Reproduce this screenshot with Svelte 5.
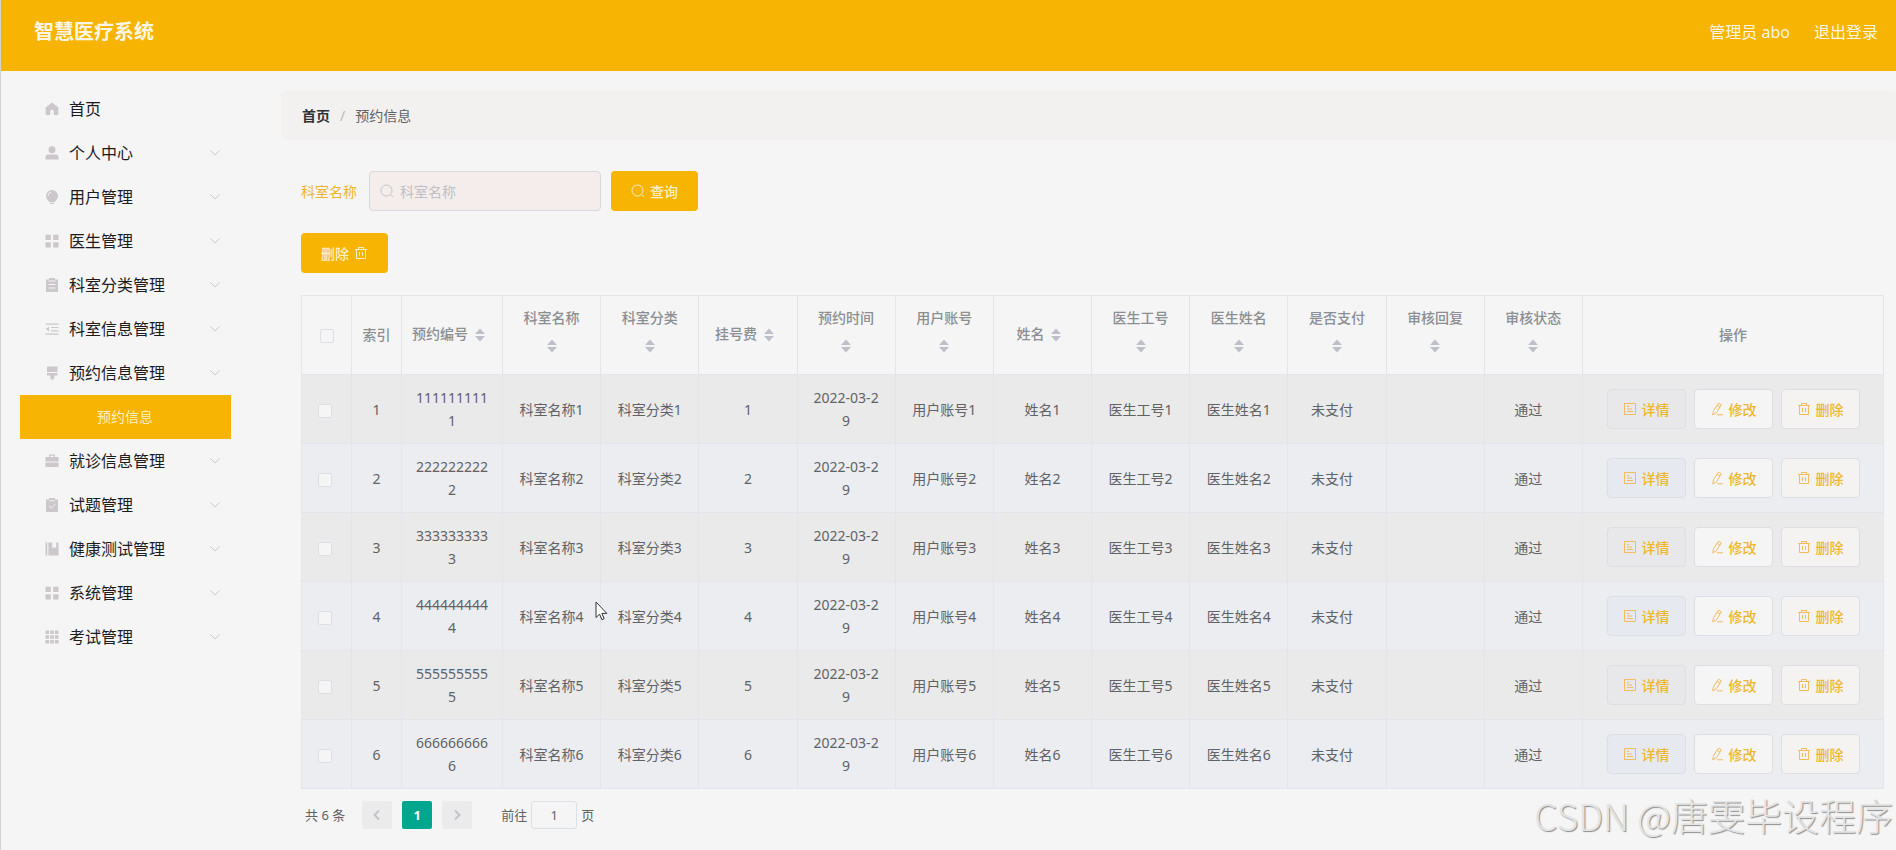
<!-- Appointment list page of the 智慧医疗系统 admin -->
<script lang="ts">
  type MenuItem = { icon: string; label: string; child?: string };

  // ── Sidebar ──────────────────────────────────────────────
  const menu: MenuItem[] = [
    { icon: 'home', label: '首页' },
    { icon: 'user', label: '个人中心' },
    { icon: 'bulb', label: '用户管理' },
    { icon: 'grid', label: '医生管理' },
    { icon: 'order', label: '科室分类管理' },
    { icon: 'fold', label: '科室信息管理' },
    { icon: 'brush', label: '预约信息管理', child: '预约信息' },
    { icon: 'case', label: '就诊信息管理' },
    { icon: 'claim', label: '试题管理' },
    { icon: 'book', label: '健康测试管理' },
    { icon: 'grid', label: '系统管理' },
    { icon: 'dots', label: '考试管理' },
  ];

  // ── Table ────────────────────────────────────────────────
  const columns = [
    '预约编号', '科室名称', '科室分类', '挂号费', '预约时间', '用户账号',
    '姓名', '医生工号', '医生姓名', '是否支付', '审核回复', '审核状态',
  ];

  const rows = [1, 2, 3, 4, 5, 6].map((n) => ({
    n,
    code: String(n).repeat(10),
    date: '2022-03-29',
    paid: '未支付',
    reply: '',
    status: '通过',
  }));

  let keyword = $state('');
  let page = $state('1');
  let selected: number[] = $state([]);

  function toggleAll() {
    selected = selected.length === rows.length ? [] : rows.map((r) => r.n);
  }
</script>

{#snippet trash()}
  <svg class="icon" viewBox="0 0 14 14" aria-hidden="true">
    <path d="M1 3.500h12M4.500 3.500v-2h5v2M2.500 3.500v9h9v-9M5.500 6v4M8.500 6v4" />
  </svg>
{/snippet}

{#snippet search()}
  <svg class="icon" viewBox="0 0 14 14" aria-hidden="true">
    <circle cx="6.500" cy="6.500" r="5.500" /><path d="M10.500 10.500L13 13" />
  </svg>
{/snippet}

{#snippet menuIcon(name: string)}
  <svg class="menu-icon" viewBox="0 0 14 14" aria-hidden="true">
    {#if name === 'home'}
      <path d="M7 .5L.7 5.600V13h4.500V9.500a1.800 1.800 0 0 1 3.600 0V13h4.500V5.600z" />
    {:else if name === 'user'}
      <circle cx="7" cy="3.700" r="3.500" />
      <path d="M3 8.500h8a2.500 2.500 0 0 1 2.500 2.500v2.500H.5V11A2.500 2.500 0 0 1 3 8.500z" />
    {:else if name === 'bulb'}
      <path d="M7 0a6 6 0 0 0-6 6c0 2.700 2 4 3 6h6c1-2 3-3.300 3-6a6 6 0 0 0-6-6zM5 12.800h4V14H5z" />
      <path class="cut" d="M3 6a4 4 0 0 1 3-3.800" />
    {:else if name === 'grid'}
      <path d="M.5.800h5.300v5.300H.5zM8.200.800h5.300v5.300H8.200zM.5 8.200h5.300v5.300H.5zM8.200 8.200h5.300v5.300H8.200z" />
    {:else if name === 'order'}
      <path d="M1 1.500h3V0h6v1.500h3V14H1z" />
      <path class="cut" d="M3.500 3h7M3.500 6.500h7M3.500 10h7" />
    {:else if name === 'fold'}
      <path d="M.5 1.500h13v1.200H.5zM6 4.900h7.500v1.200H6zM6 8.200h7.500v1.200H6zM.5 11.500h13v1.200H.5zM4 4.500v5L.8 7z" />
    {:else if name === 'brush'}
      <path d="M2 .5h10.500V6H2zM2 7h10.500v2.500h-3L8.800 13.500H5.800L5.200 9.500H2z" />
    {:else if name === 'case'}
      <path d="M4 3V.5h6V3h3.500v4.500H.5V3zM5.200 1.700V3h3.600V1.700zM.5 8.500h13V13H.5z" fill-rule="evenodd" />
    {:else if name === 'claim'}
      <path d="M1 1.500h3V0h6v1.500h3V14H1z" />
      <path class="cut" d="M4.500 2.800h5M4 7.800l2.300 2.200L10.500 6" />
    {:else if name === 'book'}
      <path d="M.5.500h1.800v13H.5zM3.400.500h3.800v6l2-1.600 2 1.600v-6h2.300v13H3.400z" />
    {:else}
      <path d="M.5.500h3.600v3.600H.5zM5.200.500h3.600v3.600H5.200zM9.900.500h3.600v3.600H9.900zM.5 5.200h3.600v3.600H.5zM5.200 5.200h3.600v3.600H5.200zM9.900 5.200h3.600v3.600H9.900zM.5 9.900h3.600v3.600H.5zM5.200 9.900h3.600v3.600H5.200zM9.900 9.900h3.600v3.600H9.900z" />
    {/if}
  </svg>
{/snippet}

<div class="app">
  <header class="topbar">
    <h1>智慧医疗系统</h1>
    <nav class="topbar-right">
      <a href="#user">管理员 abo</a>
      <a href="#logout">退出登录</a>
    </nav>
  </header>

  <div class="body">
    <aside class="sidebar">
      {#each menu as item, i}
        <a class="menu-item" href="#menu-{i}">
          {@render menuIcon(item.icon)}
          <span>{item.label}</span>
          {#if i > 0}
            <svg class="arrow" viewBox="0 0 12 12" aria-hidden="true"><path d="M1.500 3.500L6 8l4.500-4.500" /></svg>
          {/if}
        </a>
        {#if item.child}
          <a class="menu-child" href="#current">{item.child}</a>
        {/if}
      {/each}
    </aside>

    <main>
      <nav class="breadcrumb">
        <a href="#home">首页</a>
        <span class="slash">/</span>
        <span>预约信息</span>
      </nav>

      <div class="content">
        <form class="filter" onsubmit={(e) => e.preventDefault()}>
          <label for="keyword">科室名称</label>
          <div class="search-box">
            {@render search()}
            <input id="keyword" type="text" placeholder="科室名称" bind:value={keyword} />
          </div>
          <button class="btn-primary" type="submit">{@render search()}查询</button>
        </form>

        <button class="btn-primary" type="button">删除{@render trash()}</button>

        <table>
          <colgroup>
            <col class="col-small" />
            <col class="col-small" />
            <col class="col-code" />
            {#each columns.slice(1) as _}
              <col />
            {/each}
            <col class="col-actions" />
          </colgroup>
          <thead>
            <tr>
              <th>
                <input type="checkbox" aria-label="全选" checked={selected.length === rows.length} onchange={toggleAll} />
              </th>
              <th>索引</th>
              {#each columns as title}
                <th>
                  {title}<span class="caret">
                    <svg viewBox="0 0 10 14" aria-hidden="true"><path d="M5 .5l5 5.500H0zM5 13.500l5-5.500H0z" /></svg>
                  </span>
                </th>
              {/each}
              <th>操作</th>
            </tr>
          </thead>
          <tbody>
            {#each rows as row}
              <tr>
                <td class="shifted"><input type="checkbox" aria-label="选择 {row.n}" value={row.n} bind:group={selected} /></td>
                <td>{row.n}</td>
                <td>{row.code}</td>
                <td>科室名称{row.n}</td>
                <td>科室分类{row.n}</td>
                <td>{row.n}</td>
                <td>{row.date}</td>
                <td>用户账号{row.n}</td>
                <td>姓名{row.n}</td>
                <td>医生工号{row.n}</td>
                <td>医生姓名{row.n}</td>
                <td class="tagged">{row.paid}</td>
                <td>{row.reply}</td>
                <td class="tagged">{row.status}</td>
                <td class="actions-cell">
                  <div class="actions">
                    <button class="detail" type="button">
                      <svg class="icon" viewBox="0 0 14 14" aria-hidden="true">
                        <path d="M1.500 1.500h11v11h-11zM4 4.500h2M4 7h5M4 9.500h6" />
                      </svg>
                      详情
                    </button>
                    <button class="edit" type="button">
                      <svg class="icon" viewBox="0 0 14 14" aria-hidden="true">
                        <path d="M8.500 1.200l2.800 1.600-4.800 8-3.800 2 .8-4.200zM7.200 3.500L10 5.100M7 12.800h6" />
                      </svg>
                      修改
                    </button>
                    <button class="remove" type="button">{@render trash()}删除</button>
                  </div>
                </td>
              </tr>
            {/each}
          </tbody>
        </table>

        <div class="pagination">
          <span class="total">共 6 条</span>
          <button type="button" aria-label="上一页" disabled>
            <svg viewBox="0 0 12 12" aria-hidden="true"><path d="M8 1.500L3.500 6 8 10.500" /></svg>
          </button>
          <button class="current" type="button">1</button>
          <button type="button" aria-label="下一页" disabled>
            <svg viewBox="0 0 12 12" aria-hidden="true"><path d="M4 1.500L8.500 6 4 10.500" /></svg>
          </button>
          <label class="jump">前往<input type="text" bind:value={page} />页</label>
        </div>
      </div>
    </main>
  </div>

  <svg class="cursor" viewBox="0 0 13 20" aria-hidden="true">
    <path d="M1 1v15.500l3.600-3.300 2.300 5.500 2.300-1-2.300-5.300h4.900z" />
  </svg>
  <div class="watermark">CSDN @唐雯毕设程序</div>
</div>

<style>
  :global(body) {
    background: #f5f5f5;
  }

  .app {
    position: relative;
    box-sizing: border-box;
    min-height: 100vh;
    border-left: 1px solid rgba(0, 0, 0, 0.14);
    background: #f5f5f5;
    background-clip: padding-box;
    color: #606266;
    font: 14px/23px "Noto Sans", "Noto Sans CJK SC", sans-serif;
  }

  .app *,
  .app *::before {
    box-sizing: border-box;
  }

  a {
    color: inherit;
    text-decoration: none;
  }

  button,
  input {
    margin: 0;
    font: inherit;
  }

  button {
    cursor: pointer;
  }

  .icon {
    width: 14px;
    height: 14px;
    flex: none;
    fill: none;
    stroke: currentColor;
  }

  /* ── Top bar ─────────────────────────────────────────── */
  .topbar {
    display: flex;
    justify-content: space-between;
    height: 71px;
    padding: 0 18px 0 33px;
    background: #f7b402;
    color: #faf6e4;
    line-height: 64px;
  }

  h1 {
    margin: 0;
    font-size: 20px;
    font-weight: 700;
  }

  .topbar-right {
    display: flex;
    gap: 24px;
    font-size: 16px;
  }

  .body {
    display: flex;
  }

  /* ── Sidebar ─────────────────────────────────────────── */
  .sidebar {
    flex: none;
    width: 280px;
    padding: 16px 50px 0 19px;
  }

  .menu-item {
    display: flex;
    align-items: center;
    height: 44px;
    padding: 0 10px 0 25px;
    color: #1c1c1e;
    font-size: 16px;
  }

  .menu-icon {
    width: 14px;
    height: 14px;
    margin-right: 10px;
    fill: #cbc7ca;
  }

  .cut {
    fill: none;
    stroke: #f5f5f5;
  }

  .arrow {
    width: 12px;
    height: 12px;
    margin-left: auto;
    fill: none;
    stroke: #c8c8cb;
  }

  .menu-child {
    display: block;
    height: 44px;
    padding-left: 77px;
    background: #f7b402;
    color: #faf0c8;
    line-height: 44px;
  }

  /* ── Main ────────────────────────────────────────────── */
  main {
    flex: 1;
    min-width: 0;
    padding-top: 20px;
  }

  .breadcrumb {
    display: flex;
    gap: 10px;
    padding: 13px 21px;
    border-radius: 4px;
    background: #f3f1f0;
  }

  .breadcrumb a {
    color: #303133;
    font-weight: 700;
  }

  .slash {
    color: #b4b7bf;
  }

  .content {
    padding: 31px 12px 0 20px;
  }

  .filter {
    display: flex;
    align-items: center;
    margin-bottom: 22px;
  }

  .filter label {
    margin-right: 12px;
    color: #ecb52c;
  }

  .search-box {
    display: flex;
    align-items: center;
    gap: 6px;
    width: 232px;
    height: 40px;
    margin-right: 10px;
    padding: 0 10px;
    border: 1px solid #d9d8de;
    border-radius: 4px;
    background: #f5edec;
    color: #c0c4cc;
  }

  .search-box input {
    flex: 1;
    min-width: 0;
    padding: 0;
    border: 0;
    outline: 0;
    background: none;
    color: #606266;
  }

  .search-box input::placeholder {
    color: #c0bfc6;
  }

  .btn-primary {
    display: flex;
    align-items: center;
    gap: 5px;
    height: 40px;
    padding: 0 20px;
    border: 0;
    border-radius: 4px;
    background: #f7b402;
    color: #faf0c8;
    font-weight: 500;
  }

  /* ── Table ───────────────────────────────────────────── */
  table {
    width: 100%;
    margin-top: 22px;
    border: 1px solid #e5e6ec;
    border-width: 1px 0 0 1px;
    border-spacing: 0;
    table-layout: fixed;
    text-align: center;
  }

  .col-small {
    width: 50px;
  }

  .col-code {
    width: 101px;
  }

  .col-actions {
    width: 301px;
  }

  th,
  td {
    border: 1px solid #e3e4ec;
    border-width: 0 1px 1px 0;
  }

  th {
    padding: 10px 10px 11px;
    color: #8b8e93;
    font-weight: 500;
  }

  td {
    padding: 11px 13px;
    word-break: break-all;
  }

  tbody tr:nth-child(odd) {
    background: #eaeaea;
  }

  tbody tr:nth-child(even) {
    background: #ebedf1;
  }

  /* caret pair to the right of a sortable title, or under it */
  .caret {
    display: inline-flex;
    align-items: center;
    justify-content: center;
    width: 24px;
    height: 34px;
    vertical-align: middle;
  }

  .caret svg {
    width: 10px;
    height: 14px;
    fill: #bdc0c8;
  }

  input[type='checkbox'] {
    appearance: none;
    display: inline-block;
    width: 14px;
    height: 14px;
    border: 1px solid #dcdfe6;
    border-radius: 2px;
    background: #f5f5f5;
    vertical-align: middle;
  }

  input[type='checkbox']:checked {
    background: #f7b402;
  }

  td.shifted {
    padding-right: 14px;
    padding-left: 10px;
  }

  td.tagged {
    padding-right: 23px;
  }

  td.actions-cell {
    padding: 0;
  }

  .actions {
    display: flex;
    justify-content: center;
    gap: 8px;
  }

  .actions button {
    display: flex;
    align-items: center;
    gap: 5px;
    height: 40px;
    padding: 0 15px;
    border: 1px solid #dcdee4;
    border-radius: 4px;
    background: #f5f5f5;
    color: #edb72e;
    font-weight: 500;
  }

  .actions .icon {
    stroke: #f3bb5c;
  }

  .actions .detail {
    background: #e8e8ea;
  }

  .actions .remove {
    background: #f5f2f2;
  }

  tr:nth-child(even) .actions .detail {
    background: #e6eaf0;
  }

  /* ── Pagination ──────────────────────────────────────── */
  .pagination {
    display: flex;
    align-items: center;
    gap: 10px;
    padding: 12px 4px;
    font-size: 13px;
    line-height: 28px;
  }

  .total {
    margin-right: 7px;
  }

  .pagination button {
    display: flex;
    align-items: center;
    justify-content: center;
    width: 30px;
    height: 28px;
    padding: 0;
    border: 0;
    border-radius: 2px;
    background: #ebebeb;
  }

  .pagination button svg {
    width: 12px;
    height: 12px;
    fill: none;
    stroke: #c0c4cc;
    stroke-width: 2;
  }

  .pagination .current {
    background: #00a78e;
    color: #f5f5f5;
    font-weight: 700;
  }

  .jump {
    display: flex;
    gap: 4px;
    margin-left: 19px;
  }

  .jump input {
    width: 46px;
    height: 28px;
    padding: 0;
    border: 1px solid #dcdfe6;
    border-radius: 3px;
    background: #f5f5f5;
    color: #606266;
    text-align: center;
  }

  /* ── Overlays ────────────────────────────────────────── */
  .cursor {
    position: absolute;
    top: 601px;
    left: 594px;
    width: 13px;
    height: 20px;
    fill: #fff;
    stroke: #333;
  }

  .watermark {
    position: absolute;
    right: 3px;
    bottom: 11px;
    color: #e4e4e4;
    font: 300 37px/48px "Noto Sans CJK SC", sans-serif;
    text-shadow: 1px 1px 1px #8c8c8c;
    pointer-events: none;
  }
</style>
